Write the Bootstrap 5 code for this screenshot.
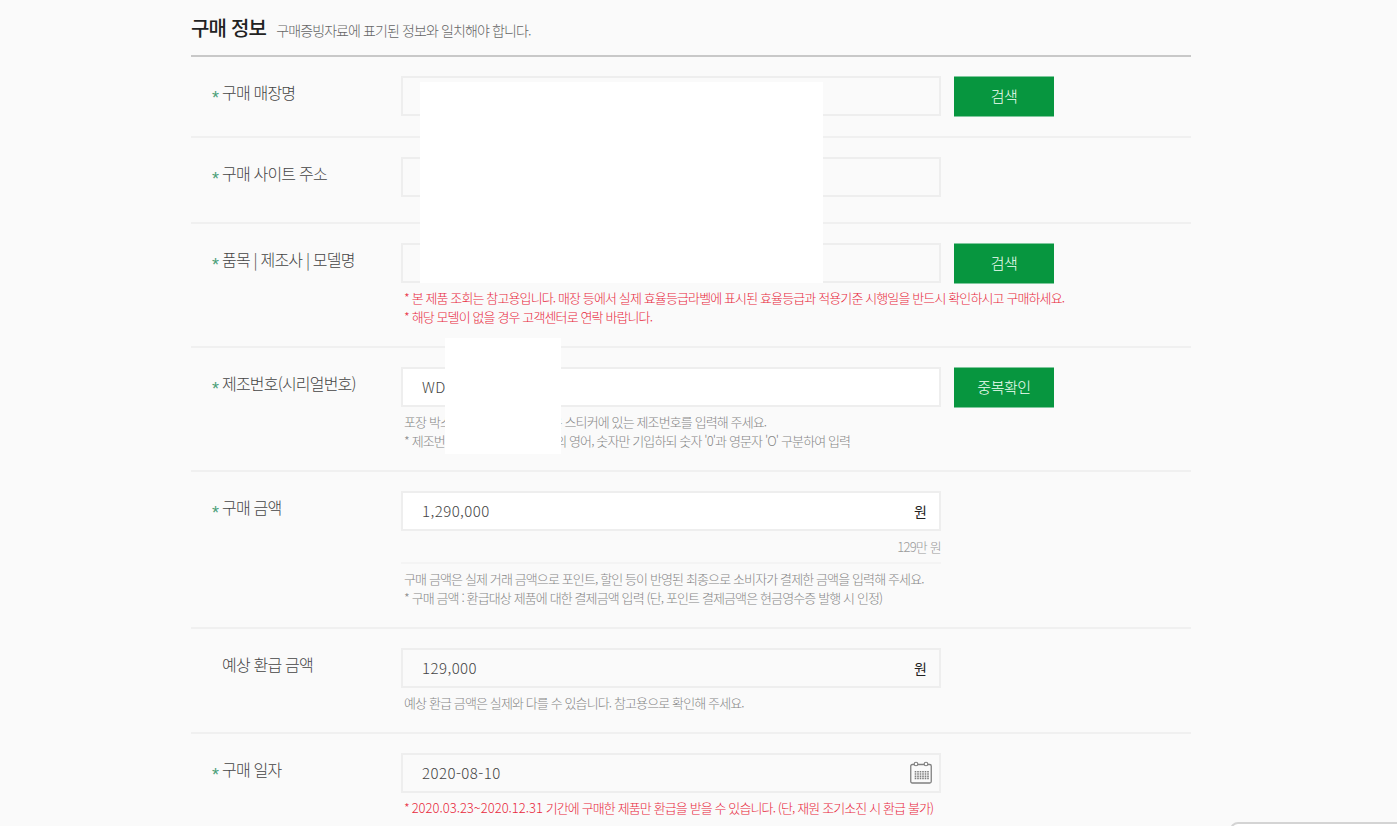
<!DOCTYPE html>
<html lang="ko">
<head>
<meta charset="utf-8">
<title>구매 정보</title>
<link href="https://cdn.jsdelivr.net/npm/bootstrap@5.3.0/dist/css/bootstrap.min.css" rel="stylesheet">
<style>
html,body{height:826px;overflow:hidden}
body{background:#fafafa;font-family:"Noto Sans CJK KR","Noto Sans",sans-serif;font-weight:300;color:#555;letter-spacing:-.05em;position:relative}
.sheet{width:1000px;margin-left:191px}
.head-bar{height:57px;border-bottom:2px solid #c8c8c8;padding-top:13px;align-items:baseline}
.head-title{font-size:20px;font-weight:500;color:#222;margin:0;line-height:30px;letter-spacing:-.04em}
.head-sub{font-size:14px;color:#666;margin-left:10px;letter-spacing:-.064em}
.line{border-bottom:2px solid #f0f0f0;padding-top:19px}
.l1{height:81px}.l2{height:86px}.l3{height:124px}.l4{height:124px}.l5{height:157px}.l6{height:105px}.l7{height:120px;padding-top:19px}
.lab{width:210px;flex:none;font-size:16px;color:#444;line-height:30px;padding-left:21px;margin-top:1px;white-space:nowrap}
.star{display:inline-block;width:10px;color:#4a9f78;font:400 18px/1 "Liberation Sans",sans-serif;vertical-align:-5px}
.nostar{display:inline-block;width:10px}
.field{width:540px;flex:none}
.box{height:40px;border:2px solid #eee;background:#fafafa;display:flex;align-items:center;justify-content:space-between;padding:1px 12px 0 19px;font-size:15px;color:#444;letter-spacing:.03em}
.box.on{background:#fff}
.unit{color:#222;font-size:14px;letter-spacing:0;font-weight:400}
.cal{margin-right:-5px;margin-top:-2px}
.go{width:100px;height:41px;margin-left:13px;background:#07963f;color:#f2fff6;border:0;border-top:1px solid #80c89e;border-bottom:1px solid #80c89e;border-radius:0;font-size:15px;font-weight:300;letter-spacing:-.03em;padding:0;flex:none}
.go:hover{background:#07963f;color:#f2fff6;border-color:#80c89e}
.gap-note{margin-top:5px}
.note{font-size:13px;line-height:19px;padding-left:3px;margin:0;white-space:nowrap;letter-spacing:-.068em}
.digits{letter-spacing:0}
.red{color:#e8283c}
.gray{color:#868686}
.man{font-size:13px;color:#999;text-align:right;line-height:24px;margin-top:4px;height:29px;border-bottom:2px solid #f4f4f4;margin-bottom:5px}
.veil{position:absolute;background:#fff}
.v1{left:420px;top:82px;width:403px;height:201px}
.v2{left:445px;top:338px;width:116px;height:116px}
.corner{position:absolute;left:1230px;top:822px;width:180px;height:40px;background:#fff;border:2px solid #d4d4d4;border-radius:8px 0 0 0}
</style>
</head>
<body>
<div class="sheet">
  <div class="head-bar d-flex">
    <h2 class="head-title">구매 정보</h2>
    <span class="head-sub">구매증빙자료에 표기된 정보와 일치해야 합니다.</span>
  </div>

  <div class="line l1 d-flex">
    <div class="lab"><span class="star">*</span>구매 매장명</div>
    <div class="field"><div class="box"></div></div>
    <button class="btn go" type="button">검색</button>
  </div>

  <div class="line l2 d-flex">
    <div class="lab"><span class="star">*</span>구매 사이트 주소</div>
    <div class="field"><div class="box"></div></div>
  </div>

  <div class="line l3 d-flex">
    <div class="lab"><span class="star">*</span>품목 | 제조사 | 모델명</div>
    <div class="field">
      <div class="box"></div>
      <div class="gap-note">
        <p class="note red">* 본 제품 조회는 참고용입니다. 매장 등에서 실제 효율등급라벨에 표시된 효율등급과 적용기준 시행일을 반드시 확인하시고 구매하세요.</p>
        <p class="note red">* 해당 모델이 없을 경우 고객센터로 연락 바랍니다.</p>
      </div>
    </div>
    <button class="btn go" type="button">검색</button>
  </div>

  <div class="line l4 d-flex">
    <div class="lab"><span class="star">*</span>제조번호(시리얼번호)</div>
    <div class="field">
      <div class="box on">WD</div>
      <div class="gap-note">
        <p class="note gray">포장 박스 또는 제품 뒷면에 붙은 스티커에 있는 제조번호를 입력해 주세요.</p>
        <p class="note gray">* 제조번호는 공백, 특수문자 제외 영어, 숫자만 기입하되 숫자 '0'과 영문자 'O' 구분하여 입력</p>
      </div>
    </div>
    <button class="btn go" type="button">중복확인</button>
  </div>

  <div class="line l5 d-flex">
    <div class="lab"><span class="star">*</span>구매 금액</div>
    <div class="field">
      <div class="box on">1,290,000<span class="unit">원</span></div>
      <div class="man">129만 원</div>
      <p class="note gray">구매 금액은 실제 거래 금액으로 포인트, 할인 등이 반영된 최종으로 소비자가 결제한 금액을 입력해 주세요.</p>
      <p class="note gray">* 구매 금액 : 환급대상 제품에 대한 결제금액 입력 (단, 포인트 결제금액은 현금영수증 발행 시 인정)</p>
    </div>
  </div>

  <div class="line l6 d-flex">
    <div class="lab"><span class="nostar"></span>예상 환급 금액</div>
    <div class="field">
      <div class="box">129,000<span class="unit">원</span></div>
      <div class="gap-note"><p class="note gray">예상 환급 금액은 실제와 다를 수 있습니다. 참고용으로 확인해 주세요.</p></div>
    </div>
  </div>

  <div class="l7 d-flex">
    <div class="lab"><span class="star">*</span>구매 일자</div>
    <div class="field">
      <div class="box">2020-08-10
        <svg class="cal" width="22" height="23" viewBox="0 0 22 23" fill="none" stroke="#808080" aria-hidden="true">
          <rect x=".75" y="3.5" width="20.5" height="18.5" rx="1.5" stroke-width="1.3"/>
          <circle cx="6" cy="3" r="1.8" fill="#fafafa" stroke-width="1.1"/>
          <circle cx="16" cy="3" r="1.8" fill="#fafafa" stroke-width="1.1"/>
          <path d="M5.5 10v9M8 10v9M10.5 10v9M13 10v9M15.5 10v9M18 10v9" stroke-width="1.6" stroke-dasharray="1.5 .7"/>
        </svg>
      </div>
      <div class="gap-note"><p class="note red">* <span class="digits">2020.03.23~2020.12.31</span> 기간에 구매한 제품만 환급을 받을 수 있습니다. (단, 재원 조기소진 시 환급 불가)</p></div>
    </div>
  </div>
</div>
<div class="veil v1"></div>
<div class="veil v2"></div>
<div class="corner"></div>
<script src="https://cdn.jsdelivr.net/npm/bootstrap@5.3.0/dist/js/bootstrap.bundle.min.js"></script>
</body>
</html>
